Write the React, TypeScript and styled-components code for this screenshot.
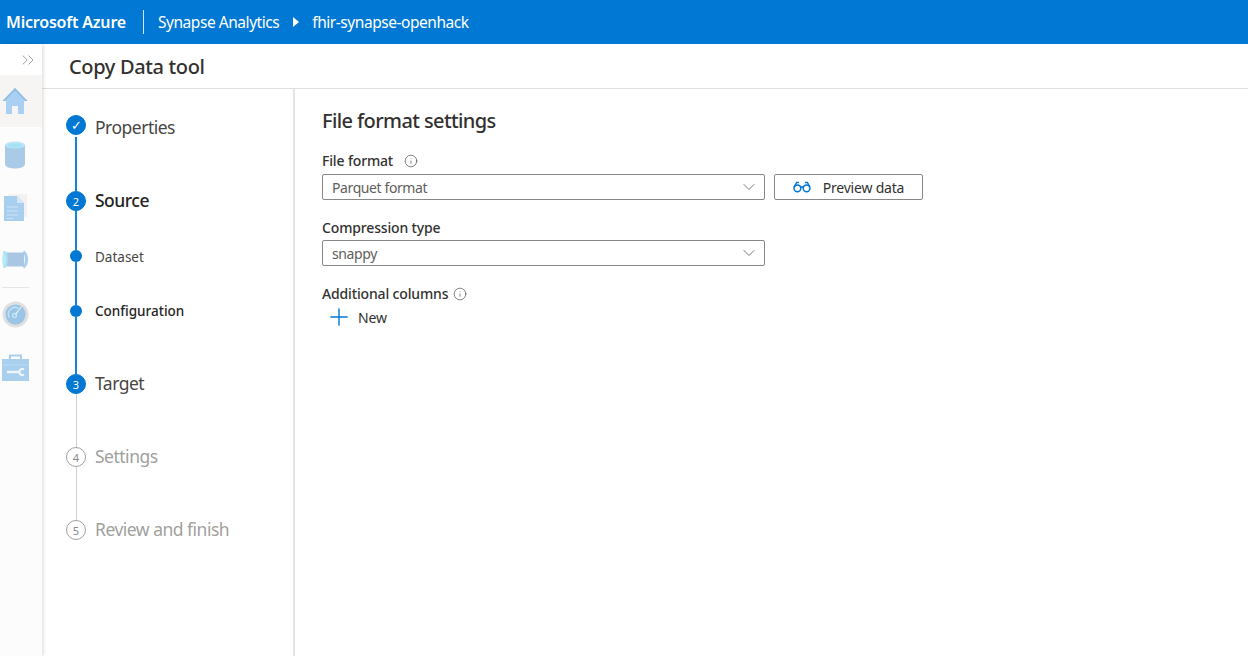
import styled, { createGlobalStyle } from "styled-components"
import { ChevronDown, ChevronsRight, Info, Plus } from "lucide-react"

const GlobalStyle = createGlobalStyle`
  html, body {
    margin: 0;
    height: 100%;
    overflow: hidden;
    background: #fff;
    font-family: "Noto Sans", "Open Sans", sans-serif;
    color: #323130;
  }
`

type StepState = "done" | "active" | "idle"

interface StepProps {
  label: string
  marker?: string
  state: StepState
  small?: boolean
  strong?: boolean
  height: number
  line?: "blue" | "grey"
  labelDrop?: number
  lineGap?: number
}

const steps: StepProps[] = [
  { label: "Properties", marker: "✓", state: "done", height: 76, line: "blue", labelDrop: 2, lineGap: 2 },
  { label: "Source", marker: "2", state: "active", strong: true, height: 59, line: "blue", labelDrop: -1 },
  { label: "Dataset", state: "active", small: true, height: 55, line: "blue", labelDrop: 1 },
  { label: "Configuration", state: "active", small: true, strong: true, height: 69, line: "blue" },
  { label: "Target", marker: "3", state: "active", height: 73, line: "grey", labelDrop: -1 },
  { label: "Settings", marker: "4", state: "idle", height: 73, line: "grey", labelDrop: -1 },
  { label: "Review and finish", marker: "5", state: "idle", height: 73, labelDrop: -1 },
]

function Step(props: StepProps) {
  return (
    <StepRow $height={props.height}>
      <Rail>
        {props.small ? (
          <Dot />
        ) : (
          <Marker $idle={props.state === "idle"} $done={props.state === "done"}>
            {props.marker}
          </Marker>
        )}
        {props.line && <Connector $grey={props.line === "grey"} $gap={props.lineGap} />}
      </Rail>
      <StepLabel
        $small={props.small}
        $strong={props.strong}
        $idle={props.state === "idle"}
        $drop={props.labelDrop}
      >
        {props.label}
      </StepLabel>
    </StepRow>
  )
}

function HomeIcon() {
  return (
    <svg width="28" height="28" viewBox="0 0 28 28">
      <path d="M14 1 L1.5 14 L5 14 L5 27 L11 27 L11 19 L17 19 L17 27 L23 27 L23 14 L26.5 14 Z" fill="#a9d0f2" />
      <path d="M14 1 L1.5 14 L3.5 14 L14 3.5 L24.5 14 L26.5 14 Z" fill="#8fbde6" />
    </svg>
  )
}

function DatabaseIcon() {
  return (
    <svg width="22" height="28" viewBox="0 0 22 28">
      <path d="M1 4 V23 C1 26 6 27.5 11 27.5 C16 27.5 21 26 21 23 V4 Z" fill="#a9cbe8" />
      <ellipse cx="11" cy="4" rx="10" ry="3.6" fill="#bfe6f7" />
      <ellipse cx="11" cy="4.5" rx="7.5" ry="2.2" fill="#a3e1f5" />
    </svg>
  )
}

function DocumentIcon() {
  return (
    <svg width="23" height="27" viewBox="0 0 23 27">
      <rect x="4" y="0" width="19" height="23" fill="#f3f2f1" />
      <path d="M0 2 H13 L20 9 V27 H0 Z" fill="#a9cfef" />
      <path d="M13 2 L20 9 H13 Z" fill="#d5e7f6" />
      <path d="M3 13 H14 M3 17 H14 M3 21 H14 M3 24.5 H9" stroke="#cfe4f6" strokeWidth="1.2" />
    </svg>
  )
}

function PipeIcon() {
  return (
    <svg width="27" height="19" viewBox="0 0 27 19">
      <rect x="4" y="2.5" width="18" height="14" fill="#a9c6e2" />
      <ellipse cx="3" cy="9.5" rx="2.8" ry="8.5" fill="#b5ecf7" />
      <path d="M1 1.5 C4 3 5 5 5 9.5 C5 14 4 16 1 17.5" fill="none" stroke="#a9cfef" strokeWidth="1" />
      <path d="M22 0.5 C27.5 4 27.5 15 22 18.5 L21 17 C23.5 13 23.5 6 21 2 Z" fill="#a9cfef" />
    </svg>
  )
}

function GaugeIcon() {
  return (
    <svg width="27" height="27" viewBox="0 0 28 28">
      <circle cx="14" cy="14" r="13.5" fill="#e1e0df" />
      <circle cx="14" cy="14" r="10.5" fill="#9cc4e6" />
      <path d="M7.5 17 A7 7 0 0 1 17 7.5" fill="none" stroke="#bfe6f7" strokeWidth="1.4" />
      <circle cx="13" cy="15" r="2" fill="none" stroke="#bfe6f7" strokeWidth="1.4" />
      <path d="M14 14 L20 6" stroke="#d5ecf8" strokeWidth="1.4" />
    </svg>
  )
}

function ToolboxIcon() {
  return (
    <svg width="27" height="27" viewBox="0 0 27 27">
      <path d="M8 6 V1.5 H19 V6" fill="none" stroke="#a9cfef" strokeWidth="2" />
      <rect x="0" y="5" width="27" height="22" fill="#a9cfef" />
      <path d="M0 11 H27" stroke="#bcd9f2" strokeWidth="1" />
      <path d="M5 18 H18" stroke="#eef6fc" strokeWidth="2.4" />
      <path d="M22 15.5 A3 3 0 1 0 22 20.5" fill="none" stroke="#eef6fc" strokeWidth="2" />
    </svg>
  )
}

function GlassesIcon() {
  return (
    <svg width="18" height="12" viewBox="0 0 18 12" fill="none" stroke="#0078d4" strokeWidth="1.5">
      <circle cx="4.4" cy="7.3" r="3.4" />
      <circle cx="13.6" cy="7.3" r="3.4" />
      <path d="M7.6 6.4 C8.4 5.7 9.6 5.7 10.4 6.4" />
      <path d="M1.2 6 L3.6 1.4 H6" />
      <path d="M16.8 6 L14.4 1.4 H12" />
    </svg>
  )
}

export default function App() {
  return (
    <Page>
      <GlobalStyle />
      <Header>
        <Brand>Microsoft Azure</Brand>
        <HeaderDivider />
        <Crumb>Synapse Analytics</Crumb>
        <CrumbArrow />
        <Crumb>fhir-synapse-openhack</Crumb>
      </Header>
      <Body>
        <Sidebar>
          <Collapse>
            <ChevronsRight size={20} strokeWidth={1} color="#8a8886" />
          </Collapse>
          <NavItem $active $height={52}><HomeIcon /></NavItem>
          <NavItem $height={56}><DatabaseIcon /></NavItem>
          <NavItem $height={48}><DocumentIcon /></NavItem>
          <NavItem $height={56}><PipeIcon /></NavItem>
          <NavDivider />
          <NavItem $height={53}><GaugeIcon /></NavItem>
          <NavItem $height={53}><ToolboxIcon /></NavItem>
        </Sidebar>
        <Workspace>
          <TitleBar>Copy Data tool</TitleBar>
          <Columns>
            <Stepper>
              {steps.map((step) => (
                <Step key={step.label} {...step} />
              ))}
            </Stepper>
            <Content>
              <Heading>File format settings</Heading>
              <FieldLabel $gap={11} $bottom={3}>
                File format
                <Info size={14} strokeWidth={1} color="#323130" />
              </FieldLabel>
              <FieldRow>
                <Select>
                  Parquet format
                  <ChevronDown size={20} strokeWidth={1} color="#605e5c" />
                </Select>
                <PreviewButton>
                  <GlassesIcon />
                  Preview data
                </PreviewButton>
              </FieldRow>
              <FieldLabel $top={18} $bottom={2}>Compression type</FieldLabel>
              <FieldRow>
                <Select>
                  snappy
                  <ChevronDown size={20} strokeWidth={1} color="#605e5c" />
                </Select>
              </FieldRow>
              <FieldLabel $top={18} $gap={5}>
                Additional columns
                <Info size={14} strokeWidth={1} color="#323130" />
              </FieldLabel>
              <NewButton>
                <Plus size={28} strokeWidth={1.2} color="#0078d4" />
                New
              </NewButton>
            </Content>
          </Columns>
        </Workspace>
      </Body>
    </Page>
  )
}

const Page = styled.div`
  display: flex;
  flex-direction: column;
  width: 1248px;
  height: 656px;
  overflow: hidden;
`

const Header = styled.header`
  display: flex;
  align-items: center;
  flex: 0 0 44px;
  padding-left: 6px;
  box-sizing: border-box;
  background: #0078d4;
  color: #fff;
`

const Brand = styled.span`
  font-size: 16px;
  font-weight: 600;
  letter-spacing: -0.2px;
`

const HeaderDivider = styled.span`
  width: 1px;
  height: 24px;
  margin: 0 14px 0 17px;
  background: #cfe4f6;
`

const Crumb = styled.span`
  font-size: 15.5px;
  letter-spacing: -0.45px;
`

const CrumbArrow = styled.span`
  width: 0;
  height: 0;
  margin: 0 13px 0 14px;
  border-top: 5px solid transparent;
  border-bottom: 5px solid transparent;
  border-left: 6px solid #fff;
`

const Body = styled.div`
  display: flex;
  flex: 1;
  min-height: 0;
`

const Sidebar = styled.nav`
  display: flex;
  flex-direction: column;
  flex: 0 0 42px;
  background: #fcfcfc;
  box-shadow: 1px 0 4px rgba(0, 0, 0, 0.16);
  z-index: 1;
`

const Collapse = styled.div`
  display: flex;
  justify-content: flex-end;
  align-items: center;
  height: 31px;
  padding-right: 4px;
  background: #fff;
`

const NavItem = styled.div<{ $active?: boolean; $height: number }>`
  display: flex;
  align-items: center;
  justify-content: center;
  height: ${(p) => p.$height}px;
  padding-right: 12px;
  background: ${(p) => (p.$active ? "#f6f5f4" : "transparent")};
`

const NavDivider = styled.div`
  height: 1px;
  margin: 0 13px 0 2px;
  background: #e6e5e4;
`

const Workspace = styled.main`
  display: flex;
  flex-direction: column;
  flex: 1;
  min-width: 0;
  background: #fff;
`

const TitleBar = styled.div`
  display: flex;
  align-items: center;
  flex: 0 0 45px;
  padding-left: 27px;
  box-sizing: border-box;
  border-bottom: 1px solid #dfdfdf;
  font-size: 20px;
  font-weight: 500;
  letter-spacing: -0.35px;
`

const Columns = styled.div`
  display: flex;
  flex: 1;
  min-height: 0;
`

const Stepper = styled.div`
  flex: 0 0 253px;
  box-sizing: border-box;
  padding: 26px 0 0 24px;
  border-right: 2px solid #e4e4e4;
`

const StepRow = styled.div<{ $height: number }>`
  display: flex;
  height: ${(p) => p.$height}px;
`

const Rail = styled.div`
  display: flex;
  flex-direction: column;
  align-items: center;
  flex: 0 0 20px;
`

const Marker = styled.span<{ $idle?: boolean; $done?: boolean }>`
  display: flex;
  align-items: center;
  justify-content: center;
  flex: 0 0 20px;
  width: 20px;
  box-sizing: border-box;
  border-radius: 50%;
  border: 1px solid ${(p) => (p.$idle ? "#a19f9d" : "#0078d4")};
  background: ${(p) => (p.$idle ? "#fff" : "#0078d4")};
  color: ${(p) => (p.$idle ? "#8a8886" : "#fff")};
  font-size: ${(p) => (p.$done ? 13 : 11)}px;
`

const Dot = styled.span`
  flex: 0 0 12px;
  width: 12px;
  border-radius: 50%;
  background: #0078d4;
`

const Connector = styled.span<{ $grey?: boolean; $gap?: number }>`
  flex: 1;
  width: ${(p) => (p.$grey ? 1 : 2)}px;
  margin-top: ${(p) => p.$gap ?? 0}px;
  background: ${(p) => (p.$grey ? "#d2d0ce" : "#0f86dc")};
`

const StepLabel = styled.span<{ $small?: boolean; $strong?: boolean; $idle?: boolean; $drop?: number }>`
  margin-left: 9px;
  margin-top: ${(p) => p.$drop ?? 0}px;
  font-size: ${(p) => (p.$small ? 13.5 : 17.5)}px;
  font-weight: ${(p) => (p.$strong ? 500 : 400)};
  line-height: ${(p) => (p.$small ? 12 : 20)}px;
  letter-spacing: ${(p) => (p.$small ? 0 : -0.5)}px;
  color: ${(p) => (p.$idle ? "#a19f9d" : p.$strong ? "#252423" : "#484644")};
`

const Content = styled.section`
  flex: 1;
  padding: 18px 0 0 27px;
`

const Heading = styled.h2`
  margin: 0 0 17px;
  font-size: 20px;
  line-height: 27px;
  font-weight: 500;
  letter-spacing: -0.6px;
`

const FieldLabel = styled.div<{ $gap?: number; $top?: number; $bottom?: number }>`
  display: flex;
  align-items: center;
  gap: ${(p) => p.$gap ?? 0}px;
  margin-top: ${(p) => p.$top ?? 0}px;
  margin-bottom: ${(p) => p.$bottom ?? 4}px;
  font-size: 14px;
  line-height: 20px;
  font-weight: 500;
  letter-spacing: -0.15px;
`

const FieldRow = styled.div`
  display: flex;
  gap: 9px;
`

const Select = styled.div`
  display: flex;
  align-items: center;
  justify-content: space-between;
  width: 443px;
  height: 26px;
  box-sizing: border-box;
  padding: 0 5px 0 9px;
  border: 1px solid #8a8886;
  border-radius: 2px;
  font-size: 14px;
  letter-spacing: -0.4px;
  color: #605e5c;
`

const PreviewButton = styled.button`
  display: flex;
  align-items: center;
  justify-content: center;
  gap: 12px;
  width: 149px;
  height: 26px;
  padding: 0;
  border: 1px solid #8a8886;
  border-radius: 2px;
  background: #fff;
  font: inherit;
  font-size: 14px;
  letter-spacing: -0.2px;
  color: #323130;
`

const NewButton = styled.button`
  display: flex;
  align-items: center;
  gap: 5px;
  height: 28px;
  margin-top: -5px;
  padding: 0 0 0 3px;
  border: 0;
  background: none;
  font: inherit;
  font-size: 14px;
  letter-spacing: -0.15px;
  color: #323130;
`
